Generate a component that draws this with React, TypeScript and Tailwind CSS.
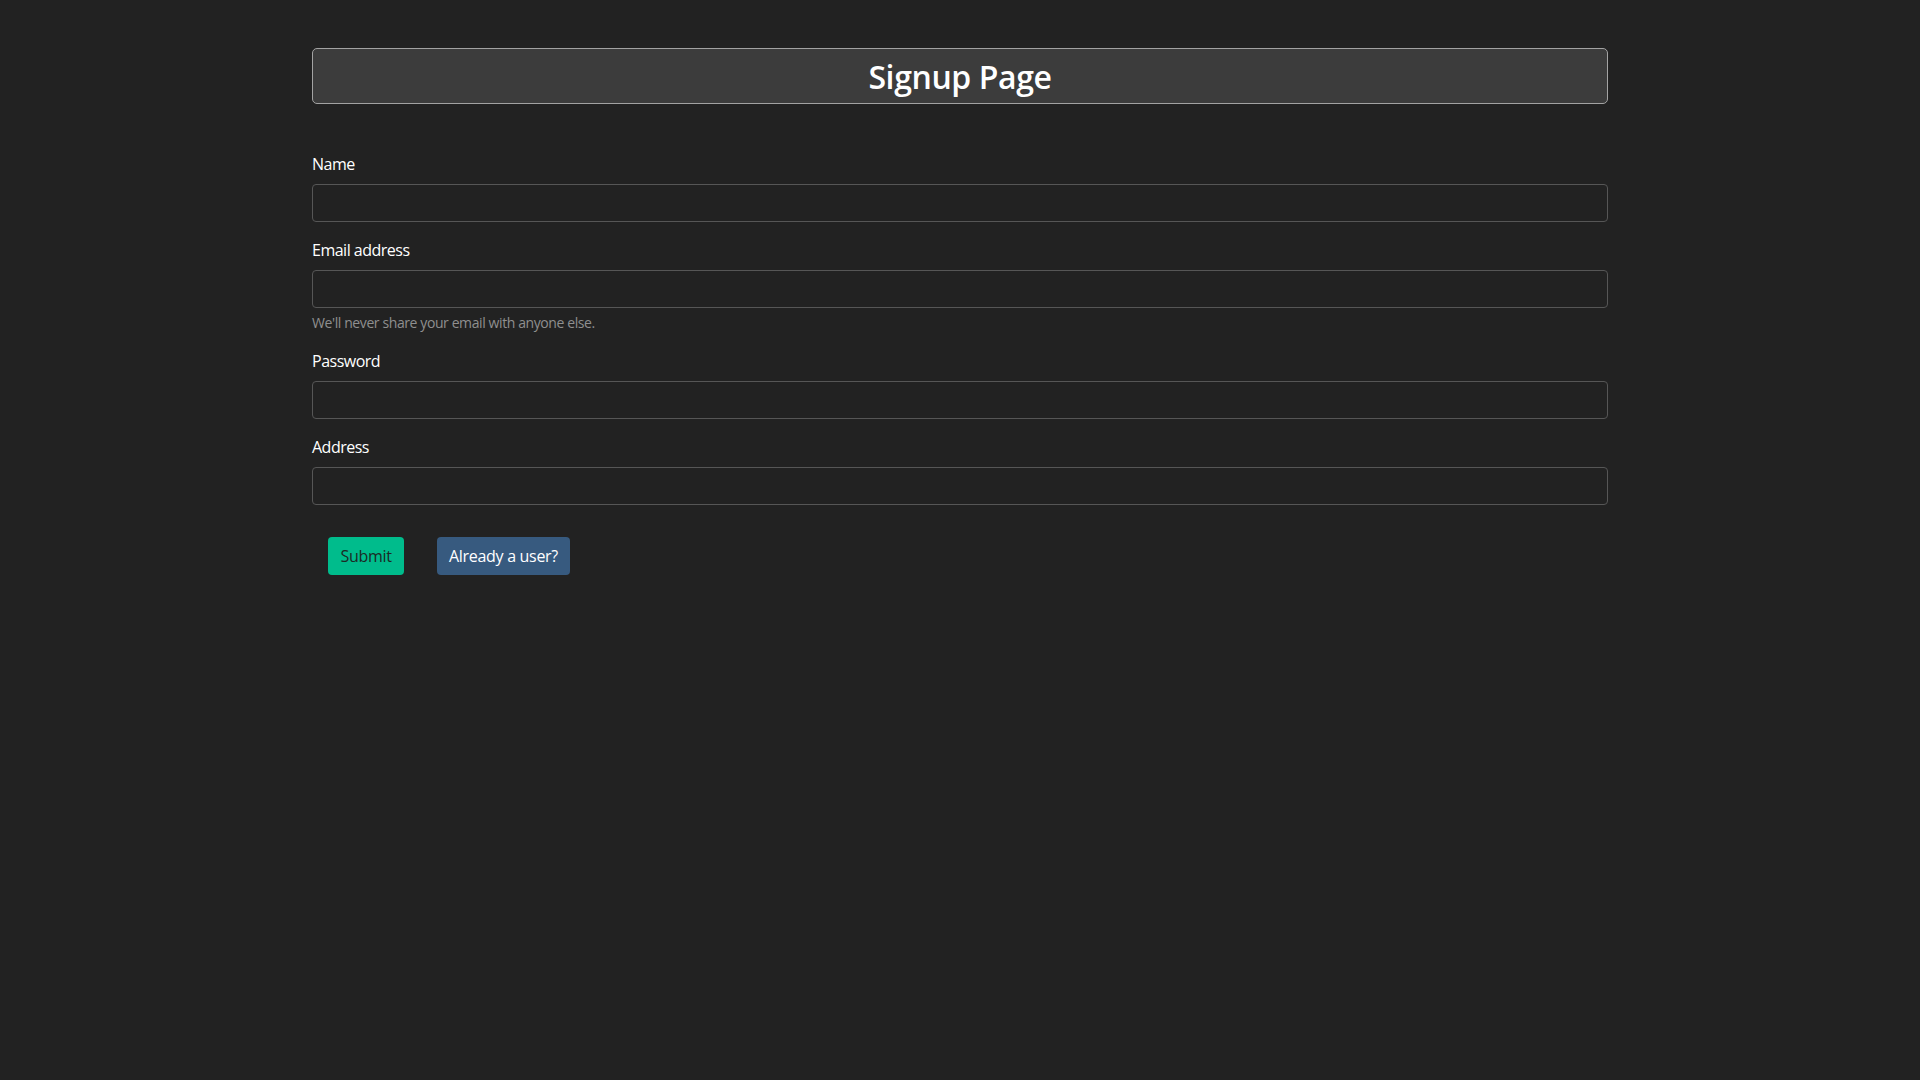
import React from "react";

function Field({ label, type = "text", help }: { label: string; type?: string; help?: string }) {
  return (
    <div className="mb-4">
      <label className="mb-2 block text-[16px] leading-6 tracking-[-0.5px] text-white">{label}</label>
      <input
        type={type}
        className="block h-[38px] w-full rounded-[4px] border border-[#565656] bg-[#222222] px-3 text-white outline-none"
      />
      {help && <div className="mt-1 text-[14px] leading-[21px] tracking-[-0.4px] text-[#8f8f8f]">{help}</div>}
    </div>
  );
}

export default function App() {
  return (
    <div
      className="min-h-screen w-full bg-[#222222] text-white"
      style={{ fontFamily: '"Open Sans", "Noto Sans", sans-serif' }}
    >
      <div className="mx-auto w-[1320px] px-3 pt-12">
        <div className="rounded-[5px] border border-[#a3a3a3] bg-[#3c3c3c] pt-[9px] pb-[7px] text-center">
          <h2 className="text-[32px] font-semibold leading-[38px] tracking-[-0.4px] text-white">Signup Page</h2>
        </div>
        <form className="mt-12" onSubmit={(e) => e.preventDefault()}>
          <Field label="Name" />
          <Field label="Email address" type="email" help="We'll never share your email with anyone else." />
          <Field label="Password" type="password" />
          <Field label="Address" />
          <div className="mt-8 flex gap-[33px] pl-4">
            <button
              type="submit"
              className="h-[38px] w-[76px] rounded-[4px] bg-[#00bc8c] px-3 text-[16px] leading-6 tracking-[-0.3px] text-[#1c2a25]"
            >
              Submit
            </button>
            <button
              type="button"
              className="h-[38px] w-[133px] rounded-[4px] bg-[#375a7f] px-3 text-[16px] leading-6 tracking-[-0.3px] text-white"
            >
              Already a user?
            </button>
          </div>
        </form>
      </div>
    </div>
  );
}
